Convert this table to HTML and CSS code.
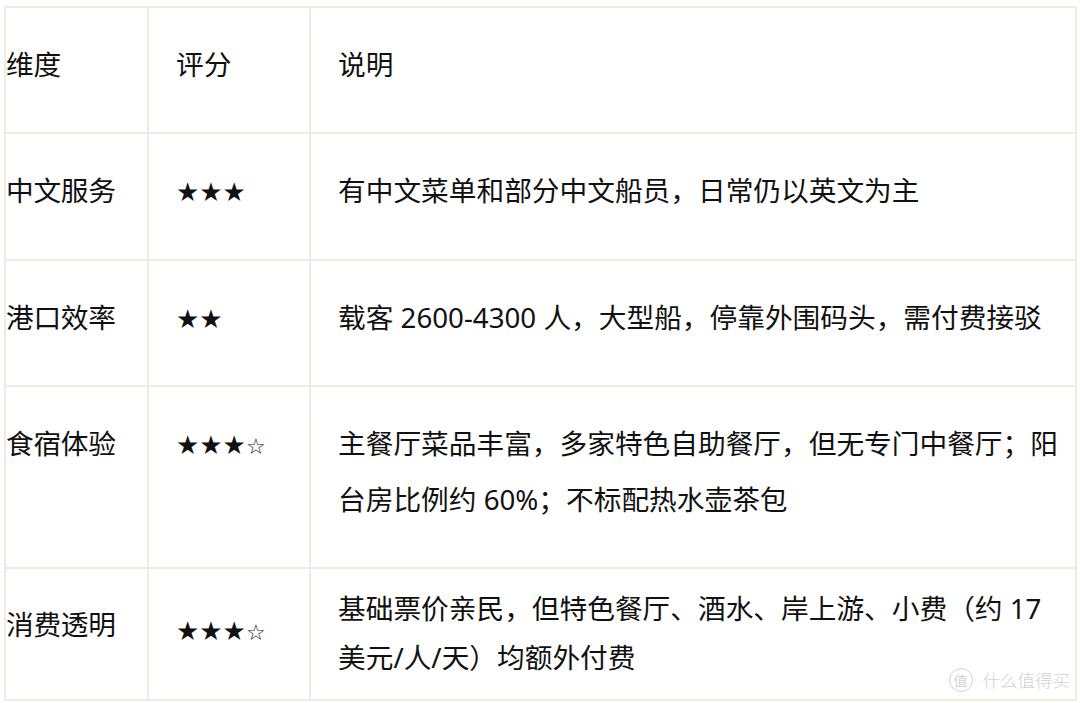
FILE: index.html
```html
<!DOCTYPE html>
<html lang="zh-CN">
<head>
<meta charset="utf-8">
<title>评分表</title>
<link rel="stylesheet" href="styles.css">
</head>
<body>
<div class="page">
  <table class="score">
    <colgroup>
      <col class="c1">
      <col class="c2">
      <col class="c3">
    </colgroup>
    <tr>
      <td class="first">维度</td>
      <td>评分</td>
      <td>说明</td>
    </tr>
    <tr>
      <td class="first">中文服务</td>
      <td><span class="stars">★★★</span></td>
      <td>有中文菜单和部分中文船员，日常仍以英文为主</td>
    </tr>
    <tr>
      <td class="first">港口效率</td>
      <td><span class="stars">★★</span></td>
      <td>载客 2600-4300 人，大型船，停靠外围码头，需付费接驳</td>
    </tr>
    <tr>
      <td class="first">食宿体验</td>
      <td><span class="stars">★★★<span class="empty">☆</span></span></td>
      <td>主餐厅菜品丰富，多家特色自助餐厅，但无专门中餐厅；阳台房比例约 60%；不标配热水壶茶包</td>
    </tr>
    <tr class="last">
      <td class="first mid">消费透明</td>
      <td class="mid-star"><span class="stars">★★★<span class="empty">☆</span></span></td>
      <td>基础票价亲民，但特色餐厅、酒水、岸上游、小费（约 17 美元/人/天）均额外付费</td>
    </tr>
  </table>
  <div class="watermark">
    <span class="wm-logo">值</span>
    <span class="wm-text">什么值得买</span>
  </div>
</div>
</body>
</html>
```

FILE: styles.css
```css
html, body {
  margin: 0;
  padding: 0;
  background: #ffffff;
}

.page {
  position: relative;
  width: 1080px;
  height: 703px;
  overflow: hidden;
  padding: 6px 0 0 4px;
  box-sizing: border-box;
}

.score {
  border-collapse: separate;
  border-spacing: 0;
  table-layout: fixed;
  width: 1073px;
  border-left: 2px solid #efebe2;
  border-top: 2px solid #efebe2;
  font-family: "Noto Sans", "Noto Sans CJK SC", sans-serif;
  font-size: 27.7px;
  line-height: 55.4px;
  color: #111111;
}

.c1 { width: 143px; }
.c2 { width: 162px; }
.c3 { width: 766px; }

.score td {
  box-sizing: border-box;
  border-right: 2px solid #efebe2;
  border-bottom: 2px solid #efebe2;
  padding: 29px 8px 40px 27px;
  vertical-align: top;
  white-space: normal;
  word-break: break-all;
}

.score td.first {
  padding-left: 0;
  padding-right: 0;
  white-space: nowrap;
  letter-spacing: -0.3px;
}

.stars {
  font-size: 26px;
  line-height: 0;
  font-family: "DejaVu Sans", sans-serif;
}

.stars .empty {
  font-size: 22px;
  color: #222;
}

.last td {
  line-height: 49px;
  padding-top: 15px;
  padding-bottom: 17px;
}

.last .stars {
  line-height: 0;
}

.last td.mid {
  vertical-align: middle;
  padding-bottom: 35px;
}

.last td.mid-star {
  vertical-align: middle;
  padding-bottom: 25px;
}

.watermark {
  position: absolute;
  right: 10px;
  bottom: 11px;
  display: flex;
  align-items: center;
  gap: 10px;
  color: #d2d2d2;
  font-family: "Noto Sans CJK SC", sans-serif;
}

.wm-logo {
  width: 22px;
  height: 22px;
  border: 1.5px solid #d2d2d2;
  border-radius: 50%;
  font-size: 14px;
  line-height: 22px;
  text-align: center;
}

.wm-text {
  font-size: 17.5px;
  line-height: 22px;
  font-weight: 300;
}
```
